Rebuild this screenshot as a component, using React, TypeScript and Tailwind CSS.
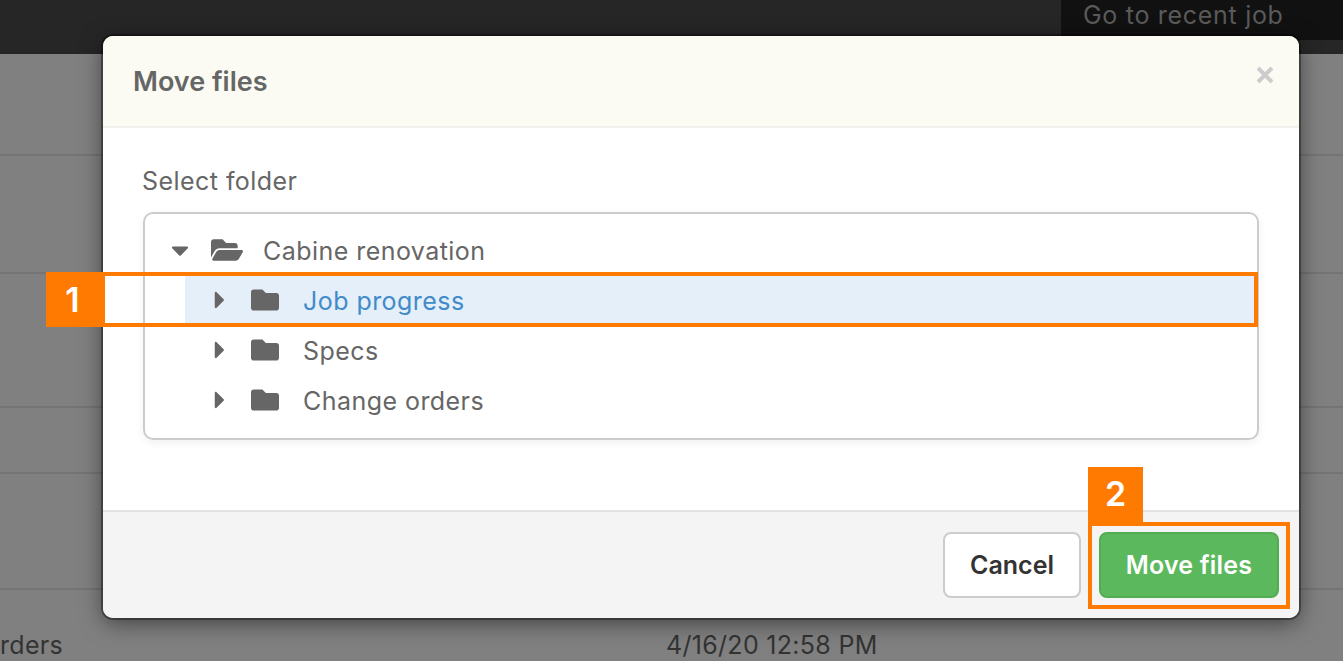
import React from "react";
import { FaCaretDown, FaCaretRight, FaFolder, FaFolderOpen } from "react-icons/fa";

const font = "font-['Inter','Noto_Sans',sans-serif]";

// background table behind the dialog
const bgRows = ["h-[102px]", "h-[118px]", "h-[134px]", "h-[66px]", "h-[116px]"];

const TreeRow = ({
  label,
  open = false,
  selected = false,
}: {
  label: string;
  open?: boolean;
  selected?: boolean;
}) => {
  const Caret = open ? FaCaretDown : FaCaretRight;
  const Folder = open ? FaFolderOpen : FaFolder;
  return (
    <div
      className={`flex h-[50px] items-center pl-[26px] ${
        selected ? "bg-[#e4eff9] text-[#428bca]" : "text-[#666666]"
      }`}
    >
      <span className="flex w-[40px] shrink-0 items-center pb-[2px]">
        <span className="flex w-[18px] justify-center text-[#666666]">
          <Caret size={28} />
        </span>
      </span>
      <span className="flex w-[53px] shrink-0 items-center pb-[3px] text-[#666666]">
        <Folder size={open ? 32 : 28} />
      </span>
      <span className="ml-[-1px] text-[25px] leading-[50px] tracking-[0.45px]">{label}</span>
    </div>
  );
};

export default function App() {
  return (
    <div className={`relative h-[661px] w-[1343px] overflow-hidden bg-[#808080] ${font}`}>
      {/* page behind the backdrop */}
      <header className="flex h-[54px] justify-end bg-[#262626]">
        <div className="h-[40px] w-[282px] rounded-bl-[6px] bg-[#111111] pl-[22px] text-[25px] leading-[30px] tracking-[0.7px] text-[#5a5a5a]">
          Go to recent job
        </div>
      </header>
      {bgRows.map((h, i) => (
        <div key={i} className={`${h} border-b-2 border-[#747474]`} />
      ))}
      <div className="flex h-[71px] items-start pt-[37px] text-[25px] leading-[36px] tracking-[0.3px] text-[#333333]">
        <span className="w-[666px] shrink-0">rders</span>
        <span>4/16/20 12:58 PM</span>
      </div>

      {/* dialog */}
      <div className="absolute left-[103px] top-[36px] flex h-[582px] w-[1196px] flex-col overflow-hidden rounded-[10px] bg-white shadow-[0_0_0_2px_rgba(0,0,0,0.35),0_5px_22px_rgba(0,0,0,0.5)]">
        <div className="flex h-[92px] shrink-0 items-center justify-between border-b-2 border-[#f0f0ec] bg-[#fbfbf3] pl-[30px] pr-[25px]">
          <h1 className="text-[27px] font-semibold leading-none text-[#666666]">Move files</h1>
          <svg width="18" height="18" viewBox="0 0 18 18" className="mb-[12px]">
            <path d="M2 2 L16 16 M16 2 L2 16" stroke="#cccccc" strokeWidth="4" />
          </svg>
        </div>

        <div className="flex-1 pl-[39px] pr-[40px] pt-[33px]">
          <div className="mb-[11px] text-[25px] leading-[40px] tracking-[0.45px] text-[#666666]">Select folder</div>
          <div className="ml-[1px] h-[228px] overflow-hidden rounded-[10px] border-2 border-[#cccccc] pt-[12px] shadow-[0_3px_10px_rgba(0,0,0,0.06)]">
            <TreeRow label="Cabine renovation" open />
            <div className="ml-[40px]">
              <TreeRow label="Job progress" selected />
              <TreeRow label="Specs" />
              <TreeRow label="Change orders" />
            </div>
          </div>
        </div>

        <div className="flex h-[108px] shrink-0 items-start justify-end gap-[18px] border-t-2 border-[#e2e2e2] bg-[#f4f4f4] pr-[20px] pt-[20px]">
          <button className="h-[66px] w-[138px] rounded-[8px] border-2 border-[#cccccc] bg-white pt-[1px] text-[25px] font-semibold text-[#333333]">
            Cancel
          </button>
          <button className="h-[66px] w-[180px] rounded-[8px] border-2 border-[#52ad52] bg-[#5cb85c] pt-[1px] text-[25px] font-semibold tracking-[0.2px] text-white">
            Move files
          </button>
        </div>
      </div>

      {/* callouts */}
      <div className="absolute left-[46px] top-[272px] flex h-[55px] w-[59px] items-center justify-center pr-[6px] text-[34px] font-semibold text-white bg-[#ff7a00]">
        1
      </div>
      <div className="absolute left-[105px] top-[272px] h-[55px] w-[1153px] border-4 border-l-0 border-[#ff7a00]" />
      <div className="absolute left-[1088px] top-[467px] flex h-[55px] w-[55px] items-center justify-center bg-[#ff7a00] pb-[3px] text-[34px] font-semibold text-white">
        2
      </div>
      <div className="absolute left-[1088px] top-[522px] h-[87px] w-[202px] border-4 border-[#ff7a00]" />
    </div>
  );
}
